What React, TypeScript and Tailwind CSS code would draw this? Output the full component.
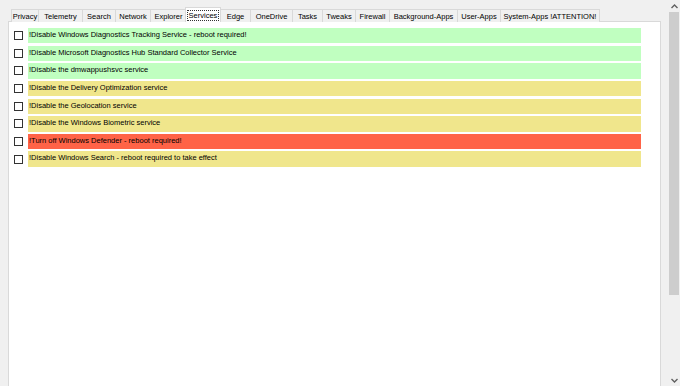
const tabs = [
  "Privacy",
  "Telemetry",
  "Search",
  "Network",
  "Explorer",
  "Services",
  "Edge",
  "OneDrive",
  "Tasks",
  "Tweaks",
  "Firewall",
  "Background-Apps",
  "User-Apps",
  "System-Apps !ATTENTION!",
];

const tabWidths = [27, 44, 33, 35, 36, 36, 30, 42, 30, 33, 34, 68, 43, 100];

const rows = [
  { text: "!Disable Windows Diagnostics Tracking Service - reboot required!", color: "bg-[#c0ffc0]" },
  { text: "!Disable Microsoft Diagnostics Hub Standard Collector Service", color: "bg-[#c0ffc0]" },
  { text: "!Disable the dmwappushsvc service", color: "bg-[#c0ffc0]" },
  { text: "!Disable the Delivery Optimization service", color: "bg-[#f0e68c]" },
  { text: "!Disable the Geolocation service", color: "bg-[#f0e68c]" },
  { text: "!Disable the Windows Biometric service", color: "bg-[#f0e68c]" },
  { text: "!Turn off Windows Defender - reboot required!", color: "bg-[#ff6347]" },
  { text: "!Disable Windows Search - reboot required to take effect", color: "bg-[#f0e68c]" },
];

export default function App() {
  return (
    <div
      className="w-[680px] h-[386px] bg-[#f0f0f0] flex overflow-hidden text-black"
      style={{ fontFamily: '"Liberation Sans", Arial, sans-serif' }}
    >
      <div className="w-[668px] pl-[8px] pt-[7px] flex flex-col">
        <div className="flex items-end h-[15px] pl-[3px] relative z-10">
          {tabs.map((t, i) =>
            t === "Services" ? (
              <div
                key={t}
                style={{ width: tabWidths[i] }}
                className="h-[15px] bg-white border border-b-0 border-[#d9d9d9] flex items-center justify-center -mx-px"
              >
                <span className="text-[7.5px] leading-[9px] border border-dotted border-[#333] px-[1px]">{t}</span>
              </div>
            ) : (
              <div
                key={t}
                style={{ width: tabWidths[i] }}
                className="h-[13px] bg-[#f0f0f0] border-l border-t border-[#d9d9d9] last:border-r flex items-center justify-center"
              >
                <span className="text-[7.5px] leading-[9px] whitespace-nowrap">{t}</span>
              </div>
            )
          )}
        </div>
        <div className="w-[653px] flex-1 bg-white border border-b-0 border-[#d9d9d9] -mt-px pt-[6px] flex flex-col">
          {rows.map((r) => (
            <div key={r.text} className="flex items-center h-[15.4px] mb-[2.25px]">
              <div className="w-[9px] h-[9px] border border-[#333] bg-white ml-[5px]" />
              <div className={`${r.color} w-[613px] h-full ml-[5px] pl-[1px] pt-[2px]`}>
                <span className="text-[7.5px] leading-[9px] block whitespace-nowrap">{r.text}</span>
              </div>
            </div>
          ))}
        </div>
      </div>
      <div className="w-[12px] h-full bg-[#f0f0f0] flex flex-col items-center">
        <div className="h-[12px] w-full flex items-center justify-center">
          <svg width="7" height="5" viewBox="0 0 7 5">
            <path d="M0.5 4 L3.5 1 L6.5 4" stroke="#606060" strokeWidth="1.4" fill="none" />
          </svg>
        </div>
        <div className="w-[10px] h-[283px] bg-[#cdcdcd]" />
        <div className="flex-1" />
        <div className="h-[12px] w-full flex items-center justify-center">
          <svg width="7" height="5" viewBox="0 0 7 5">
            <path d="M0.5 1 L3.5 4 L6.5 1" stroke="#606060" strokeWidth="1.4" fill="none" />
          </svg>
        </div>
      </div>
    </div>
  );
}
